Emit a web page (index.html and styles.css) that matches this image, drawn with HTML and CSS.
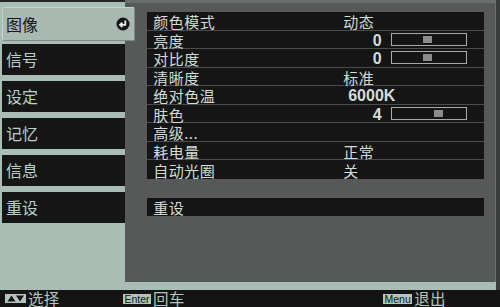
FILE: index.html
```html
<!DOCTYPE html>
<html lang="zh-CN">
<head>
<meta charset="utf-8">
<title>图像</title>
<link rel="stylesheet" href="styles.css">
</head>
<body>
<div class="screen">
  <nav class="side">
    <div class="tab active">
      <span>图像</span>
      <svg class="enter" width="14" height="14" viewBox="0 0 14 14">
        <circle cx="7" cy="7" r="6.5" fill="#151515"/>
        <path d="M9.3 3.6 V7.8 H4.6" fill="none" stroke="#e8eeea" stroke-width="1.8"/>
        <path d="M6.4 5.6 L4 7.8 L6.4 10" fill="none" stroke="#e8eeea" stroke-width="1.8"/>
      </svg>
    </div>
    <div class="tab">信号</div>
    <div class="tab">设定</div>
    <div class="tab">记忆</div>
    <div class="tab">信息</div>
    <div class="tab">重设</div>
  </nav>
  <section class="panel">
    <div class="list">
      <div class="row"><span class="lbl">颜色模式</span><span class="val">动态</span></div>
      <div class="row"><span class="lbl">亮度</span><span class="val"><span class="num">0</span><span class="slider"><span class="knob" style="margin-left:31px"></span></span></span></div>
      <div class="row"><span class="lbl">对比度</span><span class="val"><span class="num">0</span><span class="slider"><span class="knob" style="margin-left:31px"></span></span></span></div>
      <div class="row"><span class="lbl">清晰度</span><span class="val">标准</span></div>
      <div class="row"><span class="lbl">绝对色温</span><span class="val latin">6000K</span></div>
      <div class="row"><span class="lbl">肤色</span><span class="val"><span class="num">4</span><span class="slider"><span class="knob" style="margin-left:42px"></span></span></span></div>
      <div class="row"><span class="lbl">高级...</span><span class="val"></span></div>
      <div class="row"><span class="lbl">耗电量</span><span class="val">正常</span></div>
      <div class="row"><span class="lbl">自动光圈</span><span class="val">关</span></div>
    </div>
    <div class="reset">重设</div>
  </section>
</div>
<footer class="foot">
  <div class="hint">
    <svg class="arrows" width="21" height="9" viewBox="0 0 21 9">
      <rect width="21" height="9" fill="#b2c6be"/>
      <polygon points="2.5,7.5 6.5,1.5 10.5,7.5" fill="#151515"/>
      <polygon points="11,1.5 19,1.5 15,7.5" fill="#151515"/>
    </svg>
    <span class="hint-text">选择</span>
  </div>
  <div class="hint"><span class="key">Enter</span><span class="hint-text">回车</span></div>
  <div class="hint"><span class="key">Menu</span><span class="hint-text">退出</span></div>
</footer>
</body>
</html>
```

FILE: styles.css
```css
* { box-sizing: border-box; }

html, body {
  margin: 0;
  padding: 0;
}

body {
  width: 500px;
  height: 307px;
  background: #3a3c3b;
  font-family: "Noto Sans CJK SC", "Liberation Sans", sans-serif;
  overflow: hidden;
}

.screen {
  width: 496px;
  height: 290px;
  background: #a9bdb5;
  display: flex;
  align-items: flex-start;
}

.side {
  width: 125px;
  flex: none;
  border-top: 2px solid #222624;
  padding: 5px 0 0 2px;
  display: flex;
  flex-direction: column;
  gap: 6px;
}

.tab {
  height: 31px;
  background: #161616;
  color: #bcd0c8;
  font-size: 16px;
  line-height: 31px;
  padding-left: 4px;
}

.tab.active {
  position: relative;
  z-index: 1;
  height: 34px;
  margin-bottom: -3px;
  margin-right: -10px;
  background: #a7b9b1;
  color: #161616;
  border-top: 1px solid #c3d3cb;
  border-left: 1px solid #c3d3cb;
  border-right: 1px solid #7f8c86;
  border-bottom: 1px solid #7f8c86;
  border-radius: 2px;
  display: flex;
  align-items: center;
  justify-content: space-between;
  padding-left: 3px;
  padding-right: 4px;
}

.enter { display: block; }

.panel {
  flex: 1;
  height: 282px;
  background: #575858;
  border-top: 3px solid #6a6e6c;
  border-right: 1px solid #6c706e;
  padding: 9px 11px 0 21.7px;
}

.list {
  background: #151515;
}

.row {
  height: 18.5px;
  border-bottom: 1px solid #4c4c4c;
  display: grid;
  grid-template-columns: 190px 1fr;
  align-items: center;
  padding-left: 6.5px;
  padding-top: 2px;
  color: #d2ddd8;
  font-size: 15px;
  letter-spacing: 0.5px;
  line-height: 15px;
}

.row:last-child { border-bottom: none; }

.val {
  display: flex;
  align-items: center;
  white-space: nowrap;
}

.num {
  width: 38.5px;
  text-align: right;
  font-family: "Liberation Sans", sans-serif;
  font-weight: bold;
  font-size: 16px;
  letter-spacing: 0;
}

.latin {
  padding-left: 5px;
  font-family: "Liberation Sans", sans-serif;
  font-weight: bold;
  font-size: 16px;
  letter-spacing: 0;
}

.slider {
  width: 76px;
  height: 13px;
  margin-left: 9.3px;
  margin-top: -2px;
  border: 1.5px solid #a9aaa9;
  display: flex;
  align-items: center;
}

.knob {
  width: 9px;
  height: 7px;
  background: #8b8b8b;
}

.reset {
  margin-top: 19px;
  height: 18.5px;
  background: #151515;
  color: #d2ddd8;
  font-size: 15px;
  letter-spacing: 0.5px;
  line-height: 15px;
  padding: 2px 0 0 6.5px;
  display: flex;
  align-items: center;
}

.foot {
  width: 500px;
  height: 17px;
  background: #141414;
  display: grid;
  grid-template-columns: 118px 260px 1fr;
  align-items: center;
  padding-left: 5px;
}

.hint {
  display: flex;
  align-items: center;
}

.arrows { display: block; }

.key {
  background: #b2c6be;
  color: #141414;
  font-family: "Liberation Sans", sans-serif;
  font-size: 10.5px;
  line-height: 10px;
  height: 10px;
  padding: 0 1.5px;
}

.hint-text {
  margin-left: 2px;
  color: #b2c6be;
  font-size: 15.5px;
  line-height: 15px;
  letter-spacing: 0.3px;
}
```
